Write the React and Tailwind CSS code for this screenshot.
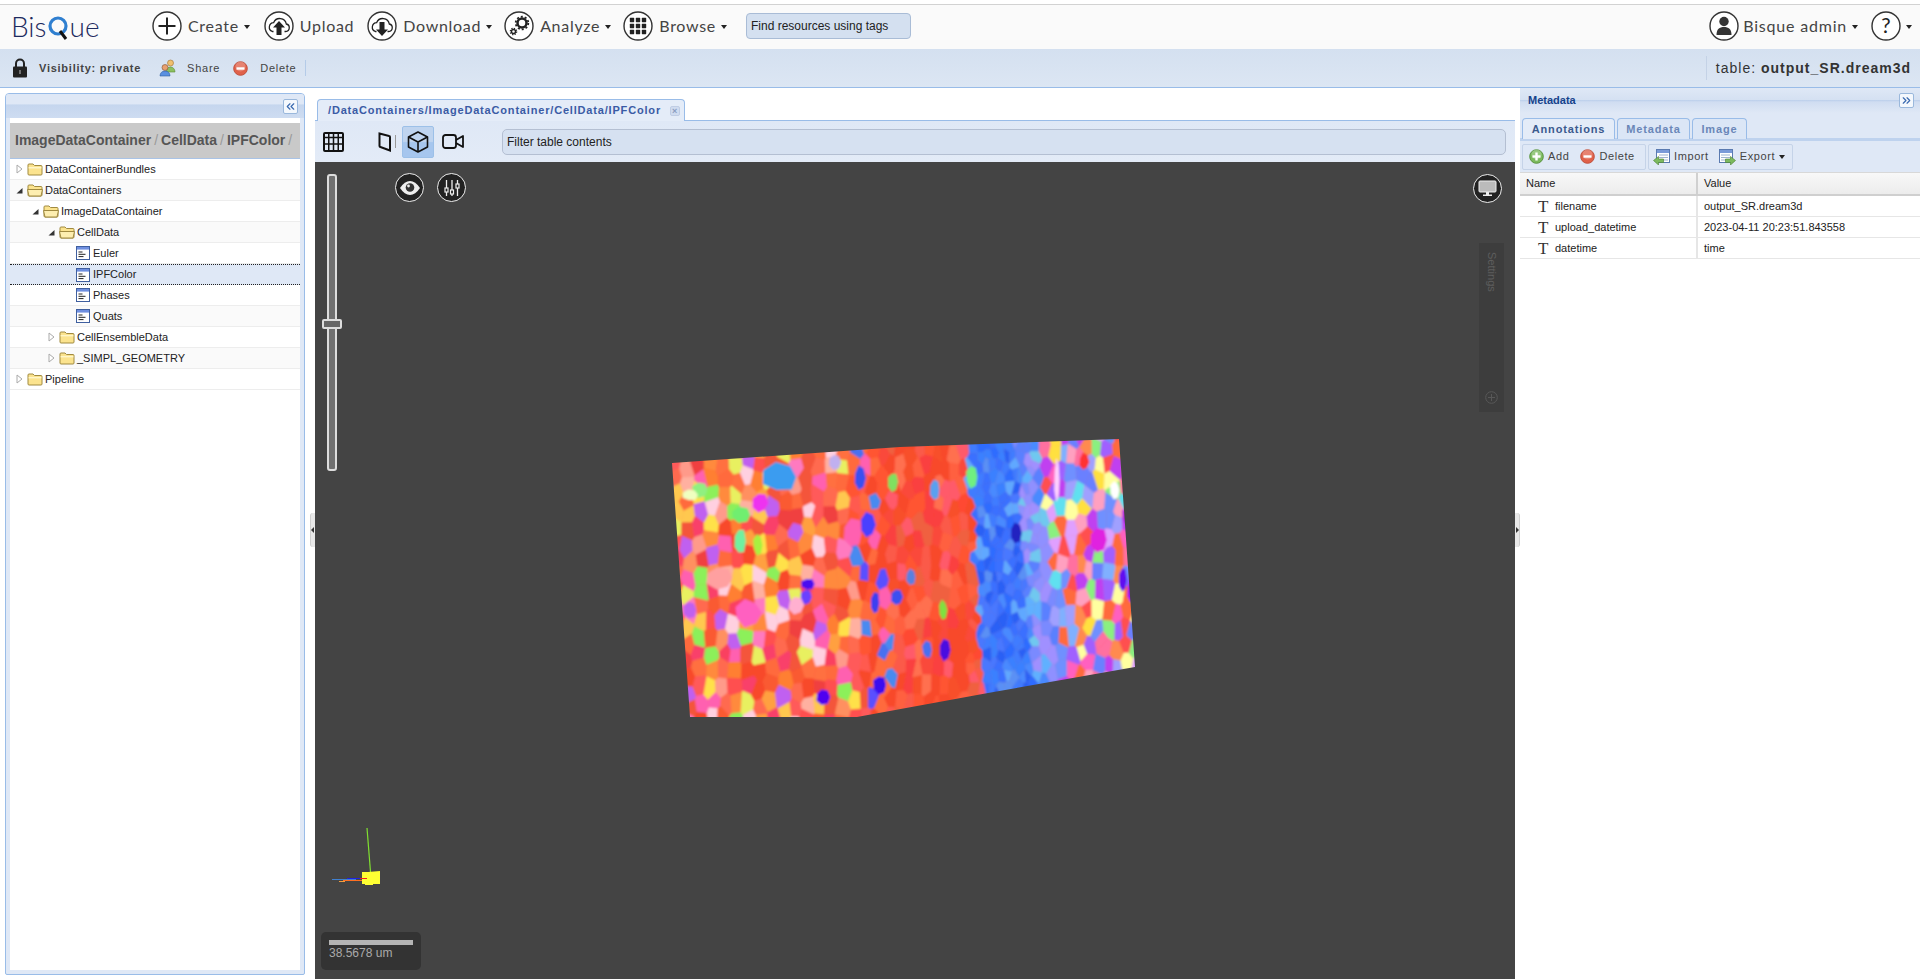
import React from "react";
import { ChevronsLeft, ChevronsRight } from "lucide-react";

const treeRows = [
  { name: "DataContainerBundles", level: 0, arrow: "closed", icon: "folder" },
  { name: "DataContainers", level: 0, arrow: "open", icon: "open" },
  { name: "ImageDataContainer", level: 1, arrow: "open", icon: "open" },
  { name: "CellData", level: 2, arrow: "open", icon: "open" },
  { name: "Euler", level: 3, icon: "leaf" },
  { name: "IPFColor", level: 3, icon: "leaf", selected: true },
  { name: "Phases", level: 3, icon: "leaf" },
  { name: "Quats", level: 3, icon: "leaf" },
  { name: "CellEnsembleData", level: 2, arrow: "closed", icon: "folder" },
  { name: "_SIMPL_GEOMETRY", level: 2, arrow: "closed", icon: "folder" },
  { name: "Pipeline", level: 0, arrow: "closed", icon: "folder" },
];

const annotations = [
  { name: "filename", value: "output_SR.dream3d" },
  { name: "upload_datetime", value: "2023-04-11 20:23:51.843558" },
  { name: "datetime", value: "time" },
];

function Caret({ className = "" }) {
  return <span className={`inline-block w-0 h-0 border-l-[3px] border-r-[3px] border-t-[4px] border-l-transparent border-r-transparent border-t-[#222] ${className}`} />;
}

function NavCircle({ children }) {
  return (
    <svg width="30" height="30" viewBox="0 0 30 30" className="shrink-0">
      <circle cx="15" cy="15" r="14" fill="#fff" stroke="#333" strokeWidth="1.4" />
      {children}
    </svg>
  );
}

function NavItem({ label, caret, className = "", children }) {
  return (
    <div className={`flex items-center shrink-0 ${className}`}>
      <NavCircle>{children}</NavCircle>
      <span className="ml-[6px] text-[16px] tracking-[0.7px] text-[#444] font-['Lato',sans-serif]">{label}</span>
      {caret && <Caret className="ml-[5px] mt-[2px]" />}
    </div>
  );
}

function CloudArrow({ down }) {
  return (
    <g>
      <path d="M20.5 20.5h1.2a3.8 3.8 0 0 0 .6-7.5 6.6 6.6 0 0 0-12.6-1.4 4.6 4.6 0 0 0-1.4 8.9h1.2" fill="none" stroke="#222" strokeWidth="1.3" />
      {down ? (
        <path d="M12.5 11h5v7.5h3.5L15 25l-6-6.5h3.5z" fill="#222" />
      ) : (
        <path d="M15 10l6 6.5h-3.5V24h-5v-7.5H9z" fill="#222" />
      )}
    </g>
  );
}

function Logo() {
  return (
    <div className="flex items-center w-[150px] pl-[11px] text-[28px] font-light text-[#1d2a5e] font-['Lato',sans-serif] leading-none">
      <span>Bis</span>
      <svg width="23" height="30" viewBox="0 0 23 30" className="mt-[3px]">
        <circle cx="11" cy="13" r="8" fill="none" stroke="#2f7fd0" strokeWidth="3.2" />
        <path d="M13 18l6 8" stroke="#111" strokeWidth="3" />
      </svg>
      <span>ue</span>
    </div>
  );
}

function LockIcon() {
  return (
    <svg width="16" height="20" viewBox="0 0 16 20">
      <path d="M4 9V5.500a4 4 0 0 1 8 0V9" fill="none" stroke="#222" strokeWidth="2" />
      <rect x="1" y="8.500" width="14" height="11" rx="1" fill="#222" />
      <rect x="7.200" y="12" width="1.600" height="4" fill="#888" />
    </svg>
  );
}

function ShareIcon() {
  return (
    <svg width="18" height="18" viewBox="0 0 18 18">
      <circle cx="11.500" cy="4" r="3" fill="#f0c070" stroke="#a07030" strokeWidth=".6" />
      <path d="M7 13c0-3 2-5 4.500-5S16 10 16 13z" fill="#8cc060" stroke="#5a8a30" strokeWidth=".6" />
      <circle cx="6" cy="8.500" r="3" fill="#e8a070" stroke="#805030" strokeWidth=".6" />
      <path d="M1 17c0-3 2-5 5-5s5 2 5 5z" fill="#5a90e0" stroke="#3060a0" strokeWidth=".6" />
    </svg>
  );
}

function RoundIcon({ kind }) {
  const add = kind === "add";
  return (
    <svg width="15" height="15" viewBox="0 0 15 15">
      <circle cx="7.500" cy="7.500" r="6.800" fill={add ? "#7cba5e" : "#e0614a"} stroke={add ? "#5a9440" : "#c0503c"} />
      <circle cx="7.500" cy="5.500" r="5" fill="#fff" opacity=".22" />
      <rect x="3.500" y="6.300" width="8" height="2.400" fill="#fff" />
      {add && <rect x="6.300" y="3.500" width="2.400" height="8" fill="#fff" />}
    </svg>
  );
}

function TableArrowIcon({ left }) {
  return (
    <svg width="17" height="16" viewBox="0 0 17 16">
      <rect x={left ? 3.5 : 0.5} y="0.5" width="13" height="13" fill="#fff" stroke="#5a7ab0" />
      <rect x={left ? 4 : 1} y="1" width="12" height="3" fill="#7a9ad8" />
      <path d={left ? "M6 6h9M6 8.500h9M6 11h9" : "M2 6h9M2 8.500h9M2 11h9"} stroke="#a0b4d0" />
      {left ? (
        <path d="M0.500 11.500l5-4v2.500h5v3.500h-5V16z" fill="#7cba5e" stroke="#4a8030" strokeWidth=".6" />
      ) : (
        <path d="M16.500 11.500l-5-4v2.500h-5v3.500h5V16z" fill="#7cba5e" stroke="#4a8030" strokeWidth=".6" />
      )}
    </svg>
  );
}

function FolderIcon({ open }) {
  return (
    <svg width="16" height="14" viewBox="0 0 16 14" className="shrink-0">
      <path d="M1 3a1 1 0 0 1 1-1h4l1.500 1.500H14a1 1 0 0 1 1 1V12a1 1 0 0 1-1 1H2a1 1 0 0 1-1-1z" fill="#fbe38e" stroke="#a08a40" />
      {open ? <path d="M.5 6.500h15L14 13H2z" fill="#fdeeb0" stroke="#a08a40" /> : <path d="M1.600 5h12.800v1.400H1.600z" fill="#fff6c8" />}
    </svg>
  );
}

function LeafIcon() {
  return (
    <svg width="14" height="14" viewBox="0 0 14 14" className="shrink-0">
      <rect x=".5" y=".5" width="13" height="13" fill="#fff" stroke="#3f5f9f" />
      <rect x="1" y="1" width="12" height="2.600" fill="#6f8fe0" />
      <path d="M2.500 6h4M2.500 8.300h7M2.500 10.600h5" stroke="#222" />
    </svg>
  );
}

function TreeArrow({ kind }) {
  if (kind === "open") {
    return (
      <svg width="7" height="7" viewBox="0 0 7 7" className="shrink-0">
        <path d="M6.500 1v5.500H.5z" fill="#333" />
      </svg>
    );
  }
  return (
    <svg width="7" height="10" viewBox="0 0 7 10" className="shrink-0">
      <path d="M1 1l5 4-5 4z" fill="#fff" stroke="#aaa" />
    </svg>
  );
}

function TreeRow({ row, index }) {
  const pad = 5 + row.level * 16;
  const bg = row.selected ? "bg-[#dfe8f6] border-y border-dotted border-y-[#222]" : `border-b border-b-[#ededed] ${index % 2 ? "bg-[#fafafa]" : "bg-white"}`;
  return (
    <div className={`h-[21px] flex items-center text-[11px] text-[#222] ${bg}`} style={{ paddingLeft: pad }}>
      <div className="w-[9px] flex items-center justify-center shrink-0">{row.arrow && <TreeArrow kind={row.arrow} />}</div>
      <div className="w-[18px] flex justify-center shrink-0 ml-[2px]">
        {row.icon === "leaf" ? <LeafIcon /> : <FolderIcon open={row.icon === "open"} />}
      </div>
      <span className="ml-[1px]">{row.name}</span>
    </div>
  );
}

function CollapseButton({ right }) {
  const Icon = right ? ChevronsRight : ChevronsLeft;
  return (
    <div className="w-[15px] h-[15px] rounded-[2px] bg-[#f4f8fd] border border-[#9ab8dc] flex items-center justify-center">
      <Icon size={13} color="#3a6ab0" strokeWidth={2.2} />
    </div>
  );
}

function LeftPanel() {
  return (
    <div className="w-[300px] ml-[5px] mt-[5px] mb-[4px] flex flex-col border border-[#99bce8] rounded-t-[4px] rounded-b-[2px] bg-[#dfe8f6] overflow-hidden">
      <div className="h-[24px] flex items-center justify-end pr-[6px] bg-[linear-gradient(#dfe8f6_0%,#dfe8f6_42%,#c5d6ee_45%,#cedcf1_100%)]">
        <CollapseButton />
      </div>
      <div className="flex-1 mx-[4px] mb-[4px] bg-white pt-[5px] flex flex-col">
        <div className="h-[36px] bg-[#c9c9c9] border-b border-b-[#a9c3e6] flex items-center pl-[5px] text-[14px] font-bold text-[#555] whitespace-nowrap">
          ImageDataContainer<span className="font-normal text-[#999] mx-[3px]">/</span>CellData<span className="font-normal text-[#999] mx-[3px]">/</span>IPFColor<span className="font-normal text-[#999] mx-[3px]">/</span>
        </div>
        {treeRows.map((row, i) => <TreeRow key={row.name} row={row} index={i} />)}
      </div>
    </div>
  );
}

function mulberry(seed) {
  return () => {
    seed |= 0; seed = (seed + 0x6d2b79f5) | 0;
    let t = Math.imul(seed ^ (seed >>> 15), 1 | seed);
    t = (t + Math.imul(t ^ (t >>> 7), 61 | t)) ^ t;
    return ((t ^ (t >>> 14)) >>> 0) / 4294967296;
  };
}

const palettes = {
  left: ["#f4553a", "#ff6a3c", "#ff8a3c", "#f9406a", "#ff5a5a", "#ff9a8a", "#f4553a", "#ff6a50", "#ff7f30", "#ffa040", "#f04040", "#fa5a30", "#ff4f4f", "#ff7040", "#ff60b0", "#ff7ac0", "#ffb0a0", "#ffe14a", "#e8f060", "#8cf05a", "#ffd0e0", "#c060f0", "#ffc850", "#f8482c", "#ff9060", "#fa3f60"],
  streak: ["#4a70f0", "#5a50ff", "#ff5a50", "#ff60b0", "#f8482c", "#ff5533", "#4a8af0", "#ff6a3c", "#ff6a3c", "#f8482c"],
  red: ["#f8482c", "#ff5533", "#fa4a3a", "#f06040", "#ff4a30", "#f8502c", "#fb5a48", "#ff6040", "#f8482c", "#ff5a6a", "#ff7050", "#fa3f3f"],
  blue: ["#3a70ff", "#4a8aff", "#2a60f5", "#3f7cff", "#5a90f5", "#3a80ff", "#2f6cff", "#4878ff", "#3a70ff", "#60a8ff"],
  bluePale: ["#7a8aff", "#60b0ff", "#8f90ff", "#5a80ff", "#70c8f0", "#a090ff", "#4a8aff"],
  right: ["#ff6a3c", "#a060ff", "#ff60c0", "#8af080", "#60e0f0", "#ffe040", "#c040f0", "#7090ff", "#ffa0c0", "#ffffa0", "#a0a0ff", "#ff5050", "#80b0ff", "#e0a0ff", "#ff70a0", "#6a80ff", "#ff8a50"],
};

// hand placed grains that stand out in the reference
const keyGrains = [
  [780, 477, 18, 15, "#3a9cf0"], [760, 503, 8, 10, "#ee30f0"], [741, 515, 10, 8, "#70ee70"], [740, 541, 6, 13, "#70f0a0"],
  [758, 545, 5, 11, "#a8f040"], [853, 533, 10, 15, "#ff60b0"], [868, 525, 8, 13, "#4a40ff"], [860, 478, 6, 12, "#3a50f0"],
  [893, 482, 5, 10, "#80e060"], [935, 490, 5, 10, "#5aa0f0"], [972, 477, 6, 11, "#70f080"], [808, 584, 7, 6, "#4a10f0"],
  [806, 597, 6, 8, "#6a40ff"], [796, 605, 8, 9, "#ffb0d0"], [897, 597, 6, 9, "#3a50f0"], [875, 603, 5, 12, "#3a40f0"],
  [911, 577, 5, 8, "#5a80e0"], [943, 610, 4, 10, "#80e040"], [945, 650, 6, 11, "#4a10e0"], [927, 650, 5, 9, "#4a70f0"],
  [823, 697, 7, 8, "#5000f0"], [880, 685, 7, 10, "#3a10f0"], [690, 610, 7, 9, "#c060f0"], [748, 613, 14, 14, "#ff60c0"],
  [720, 578, 14, 12, "#ffa0a0"], [1115, 490, 5, 9, "#ffffff"], [1099, 540, 9, 13, "#e020e0"], [1123, 580, 4, 13, "#6010f0"],
  [1131, 590, 4, 14, "#a000ff"], [1016, 533, 6, 10, "#2020c0"], [1084, 462, 5, 9, "#ff3030"], [1127, 515, 5, 9, "#b020e0"],
  [700, 490, 8, 8, "#90f080"], [690, 495, 8, 6, "#f0ffc0"], [835, 462, 6, 8, "#c0b0f0"], [1057, 480, 3, 22, "#ffd0ff"],
];

function clipHalf(poly, ax, ay, bx, by) {
  // keep the side of the bisector that is nearer to a
  const mx = (ax + bx) / 2, my = (ay + by) / 2, nx = bx - ax, ny = by - ay;
  const out = [];
  for (let i = 0; i < poly.length; i++) {
    const p = poly[i], q = poly[(i + 1) % poly.length];
    const dp = (p[0] - mx) * nx + (p[1] - my) * ny;
    const dq = (q[0] - mx) * nx + (q[1] - my) * ny;
    if (dp <= 0) out.push(p);
    if (dp * dq < 0) {
      const t = dp / (dp - dq);
      out.push([p[0] + (q[0] - p[0]) * t, p[1] + (q[1] - p[1]) * t]);
    }
  }
  return out;
}

function buildGrains() {
  const rnd = mulberry(71);
  const seeds = [];
  let x = 664;
  while (x < 1146) {
    const sy = x >= 966 && x < 1040 ? 11 : x < 850 ? 16 : 18;
    let y = 428 + rnd() * 10;
    while (y < 730) {
      const sx = x + rnd() * 7 - 3.5;
      const sv = y + rnd() * 8 - 4;
      const u = sx - (sv - 440) * 0.08;
      let pal = palettes.left;
      if (u >= 845 && u < 875) pal = palettes.streak;
      else if (u >= 875 && u < 966) pal = palettes.red;
      else if (u >= 966 && u < 1014) pal = palettes.blue;
      else if (u >= 1014 && u < 1040) pal = palettes.bluePale;
      else if (u >= 1040) pal = palettes.right;
      seeds.push({ x: sx, y: sv, c: pal[Math.floor(rnd() * pal.length)] });
      y += sy;
    }
    x += x < 845 ? 12 : x > 966 && x < 1036 ? 7 : 9;
  }
  // cells are taller than wide, so work in a squashed y
  const k = 0.66;
  return seeds.map((s, i) => {
    let poly = [[s.x - 40, (s.y - 40) * k], [s.x + 40, (s.y - 40) * k], [s.x + 40, (s.y + 40) * k], [s.x - 40, (s.y + 40) * k]];
    for (const o of seeds) {
      if (o === s || Math.abs(o.x - s.x) > 40 || Math.abs(o.y - s.y) > 45) continue;
      poly = clipHalf(poly, s.x, s.y * k, o.x, o.y * k);
    }
    const points = poly.map((p) => `${p[0].toFixed(1)},${(p[1] / k).toFixed(1)}`).join(" ");
    return <polygon key={i} points={points} fill={s.c} stroke={s.c} strokeWidth=".5" />;
  });
}

function blobPoints(cx, cy, rx, ry, rnd) {
  const pts = [];
  for (let i = 0; i < 7; i++) {
    const a = (i / 7) * Math.PI * 2;
    const f = 0.85 + rnd() * 0.25;
    pts.push(`${(cx + Math.cos(a) * rx * f).toFixed(1)},${(cy + Math.sin(a) * ry * f).toFixed(1)}`);
  }
  return pts.join(" ");
}

const grainCache = buildGrains();
const keyRnd = mulberry(9);
const keyCache = keyGrains.map(([x, y, rx, ry, c], i) => <polygon key={i} points={blobPoints(x, y, rx, ry, keyRnd)} fill={c} />);

function ViewerDrawing() {
  return (
    <svg className="absolute inset-0" width="1200" height="817" viewBox="315 162 1200 817">
      <defs>
        <clipPath id="volume">
          <polygon points="672,463 900,447 1119,439 1135,667 988,693 857,717 690,717" />
        </clipPath>
        <filter id="soft"><feGaussianBlur stdDeviation="0.95" /></filter>
      </defs>
      <g clipPath="url(#volume)">
        <g filter="url(#soft)">
          <rect x="660" y="430" width="490" height="300" fill="#f4553a" />
          {grainCache}
          {keyCache}
        </g>
      </g>
      <path d="M367 828l3.500 44" stroke="#80e030" strokeWidth="1.200" fill="none" />
      <path d="M332 879.500h24" stroke="#4080d0" strokeWidth="1" />
      <path d="M347 878.500h20" stroke="#2020e0" strokeWidth="1" />
      <path d="M343 880.500h24" stroke="#ff7020" strokeWidth="1" />
      <path d="M339 881.500h6" stroke="#f0a040" strokeWidth="1" />
      <path d="M362 872h6l12-1v13h-7v1h-8v-1h-3z" fill="#ffff33" />
      <path d="M360 878.500h7" stroke="#ee2020" strokeWidth="1" />
    </svg>
  );
}

function OverlayCircle({ className, children }) {
  return (
    <div className={`absolute w-[29px] h-[29px] rounded-full bg-[#222] border-[1.5px] border-[#eee] flex items-center justify-center ${className}`}>
      {children}
    </div>
  );
}

function Viewer() {
  return (
    <div className="relative flex-1 bg-[#444444] overflow-hidden">
      <ViewerDrawing />
      <div className="absolute left-[12px] top-[12px] w-[10px] h-[297px] rounded-[3px] border-2 border-[#ddd] bg-[#707070]" />
      <div className="absolute left-[7px] top-[157px] w-[20px] h-[10px] rounded-[2px] border-2 border-[#ddd] bg-[#666]" />
      <OverlayCircle className="left-[80px] top-[11px]">
        <svg width="22" height="16" viewBox="0 0 22 16">
          <path d="M1 8c3-4.500 6.500-7 10-7s7 2.500 10 7c-3 4.500-6.500 7-10 7S4 12.500 1 8z" fill="#eee" />
          <circle cx="11" cy="7.500" r="4.300" fill="#333" />
          <circle cx="9.500" cy="6" r="1.400" fill="#eee" />
        </svg>
      </OverlayCircle>
      <OverlayCircle className="left-[122px] top-[11px]">
        <svg width="18" height="18" viewBox="0 0 18 18" fill="none" stroke="#eee">
          <path d="M3.500 1v16M9 1v16M14.500 1v16" strokeWidth="1.300" />
          <rect x="2" y="9" width="3" height="4" fill="#222" strokeWidth="1.200" />
          <rect x="7.500" y="11" width="3" height="4" fill="#222" strokeWidth="1.200" />
          <rect x="13" y="5" width="3" height="4" fill="#222" strokeWidth="1.200" />
        </svg>
      </OverlayCircle>
      <OverlayCircle className="left-[1158px] top-[12px]">
        <svg width="19" height="17" viewBox="0 0 19 17">
          <rect x="1" y="1" width="17" height="11" rx="1" fill="#bbb" stroke="#eee" />
          <path d="M8 12h3v2.500h3V16H5v-1.500h3z" fill="#eee" />
        </svg>
      </OverlayCircle>
      <div className="absolute left-[1164px] top-[81px] w-[25px] h-[169px] bg-[#3d3d3d] flex flex-col items-center justify-between pt-[9px] pb-[8px]">
        <span className="[writing-mode:vertical-rl] text-[11px] text-[#5e5e5e]">Settings</span>
        <svg width="13" height="13" viewBox="0 0 13 13" fill="none" stroke="#585858">
          <circle cx="6.500" cy="6.500" r="5.800" />
          <path d="M6.500 3v7M3 6.500h7" />
        </svg>
      </div>
      <div className="absolute left-[6px] top-[770px] w-[100px] h-[38px] rounded-[5px] bg-[#333] pt-[8px] px-[8px]">
        <div className="w-[84px] h-[5px] bg-[#b4b4b4]" />
        <div className="text-[12px] leading-[16px] text-[#aaa]">38.5678 um</div>
      </div>
    </div>
  );
}

function MainPanel() {
  return (
    <div className="w-[1200px] flex flex-col shrink-0">
      <div className="h-[33px] pt-[10px] px-[2px] border-b border-b-[#99bce8] flex items-end">
        <div className="w-[368px] h-[22px] -mb-[1px] flex items-center justify-between pl-[10px] pr-[4px] bg-[#e4ecf8] border border-b-0 border-[#99bce8] rounded-t-[4px] text-[11px] font-bold tracking-[0.82px] text-[#3a5ba5]">
          <span>/DataContainers/ImageDataContainer/CellData/IPFColor</span>
          <span className="w-[10px] h-[10px] rounded-[2px] bg-[#d0dcf0] border border-[#c0cde4] text-[#8a9cc0] text-[9px] leading-[8px] text-center">×</span>
        </div>
      </div>
      <div className="h-[41px] flex items-center bg-[linear-gradient(#dfe8f6,#e3ebf7)]">
        <svg width="21" height="20" viewBox="0 0 21 20" className="ml-[8px]" fill="none" stroke="#111" strokeWidth="2">
          <rect x="1" y="1" width="19" height="18" rx="1" />
          <path d="M1 5.500h19M1 12h19M5.750 1v18M10.500 1v18M15.250 1v18" strokeWidth="1.500" />
        </svg>
        <svg width="14" height="21" viewBox="0 0 14 21" className="ml-[34px]" fill="none" stroke="#111" strokeWidth="2">
          <path d="M1.500 2.500l9.500 2.500a1 1 0 0 1 1 1v13.500L2.500 16a1 1 0 0 1-1-1z" />
        </svg>
        <div className="w-px h-[13px] bg-[#999] ml-[3px]" />
        <div className="w-[32px] h-[32px] ml-[6px] rounded-[2px] border border-[#9cc0e8] bg-[linear-gradient(#bfd4ef_0%,#bfd4ef_48%,#a6c6ee_52%,#a6c6ee_100%)] flex items-center justify-center">
          <svg width="22" height="24" viewBox="0 0 22 24" fill="none" stroke="#111" strokeWidth="1.600" strokeLinejoin="round">
            <path d="M11 2l9.500 5v10L11 22l-9.500-5V7z" />
            <path d="M1.500 7L11 12l9.500-5M11 12v10" />
          </svg>
        </div>
        <svg width="22" height="15" viewBox="0 0 22 15" className="ml-[8px]" fill="none" stroke="#111" strokeWidth="1.800" strokeLinejoin="round">
          <rect x="1" y="1" width="13" height="13" rx="2.500" />
          <path d="M14 6l7-4v11l-7-4" />
        </svg>
        <div className="ml-[38px] w-[1004px] h-[26px] rounded-[5px] bg-[#d6e1f1] border border-[#b4bfd2] flex items-center pl-[4px] text-[12px] text-[#222]">
          Filter table contents
        </div>
      </div>
      <Viewer />
    </div>
  );
}

function Tab({ label, active, className = "" }) {
  return (
    <div className={`h-[21px] flex items-center justify-center rounded-t-[4px] border border-b-0 border-[#99bce8] text-[11px] font-bold tracking-[0.85px] ${active ? "bg-[#e4ecf8] text-[#3b5a8e]" : "bg-[#dbe6f6] text-[#6a86b8]"} ${className}`}>
      {label}
    </div>
  );
}

function ToolButton({ icon, label, className = "", children }) {
  return (
    <div className={`flex items-center text-[11px] tracking-[0.6px] text-[#444] ${className}`}>
      {icon}
      <span className="ml-[4px]">{label}</span>
      {children}
    </div>
  );
}

function RightPanel() {
  return (
    <div className="flex-1 flex flex-col bg-white">
      <div className="h-[25px] flex items-center justify-between pl-[8px] pr-[6px] bg-[linear-gradient(#dfe8f6_0%,#d5e1f2_46%,#bdd0ec_49%,#d0ddf1_56%,#dfe8f6_100%)] text-[11px] font-bold text-[#15428b]">
        <span>Metadata</span>
        <CollapseButton right />
      </div>
      <div className="h-[28px] pt-[5px] pl-[2px] flex gap-[2px] bg-[#dfe8f6] border-b-[3px] border-b-[#bed2ee]">
        <Tab label="Annotations" active className="w-[93px]" />
        <Tab label="Metadata" className="w-[73px]" />
        <Tab label="Image" className="w-[55px]" />
      </div>
      <div className="h-[31px] flex items-center pl-[2px] gap-[2px] bg-[#dfe8f6]">
        <div className="w-[124px] h-[26px] flex items-center pl-[6px] border border-[#c5d3e8] rounded-[2px]">
          <ToolButton icon={<RoundIcon kind="add" />} label="Add" />
          <ToolButton icon={<RoundIcon kind="delete" />} label="Delete" className="ml-[11px]" />
        </div>
        <div className="w-[145px] h-[26px] flex items-center pl-[4px] border border-[#c5d3e8] rounded-[2px]">
          <ToolButton icon={<TableArrowIcon left />} label="Import" />
          <ToolButton icon={<TableArrowIcon />} label="Export" className="ml-[10px]">
            <Caret className="ml-[4px]" />
          </ToolButton>
        </div>
      </div>
      <div className="h-[24px] grid grid-cols-[178px_1fr] bg-[linear-gradient(#f8f8f8,#ececec)] border-b-2 border-b-[#cfcfcf] border-t border-t-[#d8d8d8] text-[11px] text-[#222]">
        <div className="pl-[6px] flex items-center border-r-2 border-r-[#d0d0d0]">Name</div>
        <div className="pl-[6px] flex items-center">Value</div>
      </div>
      {annotations.map((a) => (
        <div key={a.name} className="h-[21px] grid grid-cols-[178px_1fr] border-b border-b-[#e6e6e6] text-[11px] text-[#222]">
          <div className="flex items-center pl-[18px] border-r-2 border-r-[#e6e6e6]">
            <span className="w-[17px] text-[17px] font-['Liberation_Serif',serif] text-[#333] leading-none">T</span>
            <span>{a.name}</span>
          </div>
          <div className="pl-[6px] flex items-center">{a.value}</div>
        </div>
      ))}
    </div>
  );
}

function Splitter({ side }) {
  const left = side === "left";
  return (
    <div className="w-[5px] self-center relative h-[34px] shrink-0 -mt-[8px]">
      <div className={`absolute inset-0 bg-[#e8e8e8] border-[#cfcfcf] ${left ? "border-l rounded-l-[3px]" : "border-r rounded-r-[3px]"}`} />
      <div className={`absolute top-[14px] w-0 h-0 border-y-[3px] border-y-transparent ${left ? "left-[1px] border-r-[3px] border-r-[#333]" : "left-[1px] border-l-[3px] border-l-[#333]"}`} />
    </div>
  );
}

export default function App() {
  return (
    <div className="w-[1920px] h-[979px] overflow-hidden flex flex-col bg-white font-['Liberation_Sans',Arial,sans-serif]">
      <div className="h-[5px] shrink-0 border-b border-b-[#d2d2d2]" />
      <div className="h-[44px] shrink-0 flex items-center pb-[2px] bg-[#fafafa]">
        <Logo />
        <NavItem label="Create" caret className="ml-[2px]">
          <path d="M15 6.500v17M6.500 15h17" stroke="#222" strokeWidth="2" />
        </NavItem>
        <NavItem label="Upload" className="ml-[14px]"><CloudArrow /></NavItem>
        <NavItem label="Download" caret className="ml-[13px]"><CloudArrow down /></NavItem>
        <NavItem label="Analyze" caret className="ml-[12px]">
          <circle cx="18" cy="12" r="4.500" fill="none" stroke="#222" strokeWidth="2.500" />
          <circle cx="18" cy="12" r="6.300" fill="none" stroke="#222" strokeWidth="1.800" strokeDasharray="2 1.960" />
          <circle cx="9.500" cy="20.500" r="2" fill="none" stroke="#222" strokeWidth="1.400" />
          <circle cx="9.500" cy="20.500" r="3.200" fill="none" stroke="#222" strokeWidth="1.200" strokeDasharray="1.300 1.200" />
        </NavItem>
        <NavItem label="Browse" caret className="ml-[12px]">
          {[9, 15, 21].map((y) => [9, 15, 21].map((x) => <rect key={`${x}${y}`} x={x - 2.2} y={y - 2.2} width="4.400" height="4.400" rx=".6" fill="#222" />))}
        </NavItem>
        <div className="ml-[19px] w-[165px] h-[26px] rounded-[4px] bg-[#d4e0f0] border border-[#a9bcd6] flex items-center pl-[4px] text-[12px] text-[#222]">
          Find resources using tags
        </div>
        <div className="ml-auto flex items-center pr-[8px]">
          <NavCircle>
            <circle cx="15" cy="10.500" r="4.700" fill="#333" />
            <path d="M7.500 24c0-6 3-8 7.500-8s7.500 2 7.500 8z" fill="#333" />
          </NavCircle>
          <span className="ml-[4px] text-[16px] tracking-[0.8px] text-[#444] font-['Lato',sans-serif]">Bisque admin</span>
          <Caret className="ml-[5px] mt-[2px]" />
          <div className="ml-[13px]">
            <NavCircle>
              <text x="15" y="22" textAnchor="middle" fontSize="21" fontFamily="Lato, sans-serif" fill="#222">?</text>
            </NavCircle>
          </div>
          <Caret className="ml-[5px] mt-[2px]" />
        </div>
      </div>
      <div className="h-[39px] shrink-0 flex items-center bg-[linear-gradient(#d4e0f0,#dce6f3)] border-b border-b-[#99bce8] text-[11px] tracking-[0.75px] text-[#444]">
        <div className="ml-[12px]"><LockIcon /></div>
        <span className="ml-[11px] font-bold">Visibility: private</span>
        <div className="ml-[18px]"><ShareIcon /></div>
        <span className="ml-[10px]">Share</span>
        <div className="ml-[13px]"><RoundIcon kind="delete" /></div>
        <span className="ml-[12px]">Delete</span>
        <div className="w-px h-[16px] bg-[#b4cbe8] ml-[9px]" />
        <div className="ml-auto w-px h-[24px] bg-[#c4d2e6]" />
        <span className="ml-[9px] mr-[9px] text-[14px] tracking-[1px] text-[#333]">table: <b>output_SR.dream3d</b></span>
      </div>
      <div className="flex-1 flex min-h-0">
        <LeftPanel />
        <div className="w-[5px] shrink-0" />
        <Splitter side="left" />
        <MainPanel />
        <Splitter side="right" />
        <RightPanel />
      </div>
    </div>
  );
}
